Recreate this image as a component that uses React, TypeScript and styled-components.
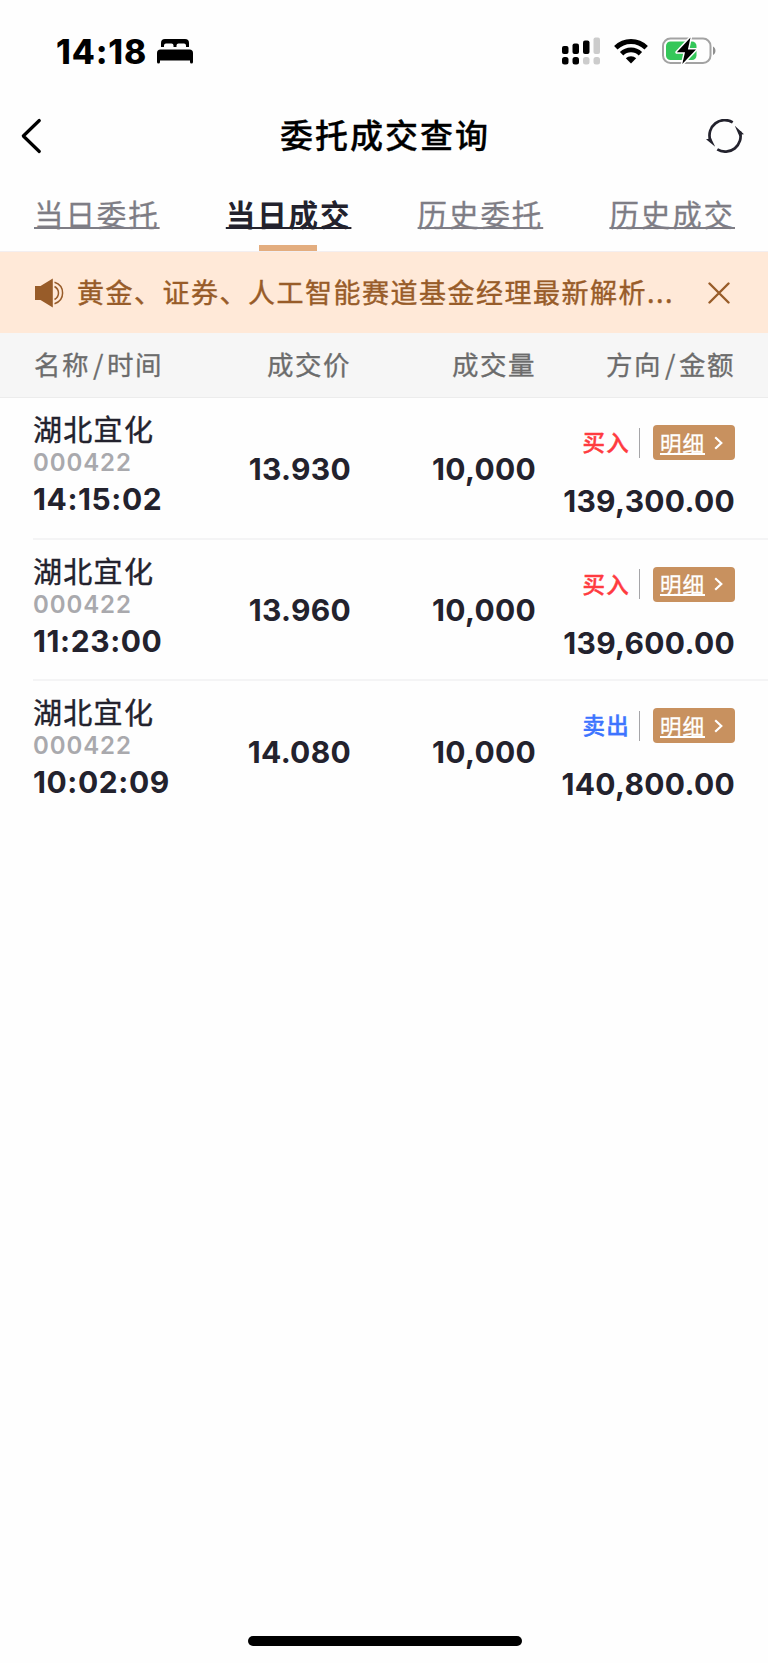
import React from 'react';
import styled, { createGlobalStyle } from 'styled-components';

const cjk = `"Noto Sans CJK SC", "Noto Sans", sans-serif`;
const latin = `Inter, "Noto Sans CJK SC", sans-serif`;

const GlobalStyle = createGlobalStyle`
  * { box-sizing: border-box; }
  html, body { margin: 0; padding: 0; background: #fefefe; }
  body { font-family: ${cjk}; color: #23222d; -webkit-font-smoothing: antialiased; }
  button { border: 0; background: none; padding: 0; margin: 0; font: inherit; color: inherit; }
`;

const Screen = styled.div`
  width: 768px;
  height: 1663px;
  display: flex;
  flex-direction: column;
  overflow: hidden;
`;

const StatusBar = styled.div`
  height: 102px;
  padding: 0 51px 0 56px;
  display: flex;
  justify-content: space-between;
  align-items: center;
  color: #000;
`;

const StatusGroup = styled.div<{ $gap: number }>`
  display: flex;
  align-items: center;
  gap: ${(p) => p.$gap}px;
`;

const Clock = styled.span`
  padding-top: 1px;
  font: 800 33.5px/40px ${latin};
  letter-spacing: 0.9px;
`;

const NavBar = styled.header`
  height: 68px;
  padding: 0 24.5px 0 20px;
  display: flex;
  align-items: center;
  justify-content: space-between;
  color: #000;
`;

const IconButton = styled.button`
  display: flex;
`;

const Title = styled.h1`
  margin: 0 0 5px 22.5px;
  font: 500 33px/48px ${cjk};
  letter-spacing: 2px;
  -webkit-text-stroke: 0.3px currentColor;
`;

const Tabs = styled.nav`
  height: 82px;
  padding: 0 33px 0 34px;
  display: flex;
  justify-content: space-between;
  border-bottom: 1px solid #f3eef0;
`;

const Tab = styled.button<{ $active?: boolean }>`
  display: flex;
  flex-direction: column;
  align-items: center;
  justify-content: space-between;
  padding-top: 21px;
  font: ${(p) => (p.$active ? 700 : 400)} 29.5px/44px ${cjk};
  letter-spacing: 1.9px;
  color: ${(p) => (p.$active ? '#23222d' : '#7e7d85')};
  -webkit-text-stroke: ${(p) => (p.$active ? 0 : 0.3)}px currentColor;
`;

const LinkLabel = styled.span`
  text-decoration: underline;
  text-decoration-thickness: 2px;
  text-underline-offset: 1px;
  text-decoration-skip-ink: none;
`;

const TabIndicator = styled.span`
  width: 58px;
  height: 6px;
  margin-right: 1px;
  background: #e3ad7f;
`;

const Notice = styled.section`
  height: 81px;
  padding: 0 38px 0 34px;
  display: flex;
  align-items: center;
  background: #ffe9d8;
  color: #985c29;
`;

const NoticeText = styled.p`
  flex: 1;
  margin: 0 0 2px 13px;
  font: 400 27px/40px ${cjk};
  letter-spacing: 1.5px;
  white-space: nowrap;
  -webkit-text-stroke: 0.4px currentColor;
`;

const Columns = styled.div`
  display: grid;
  grid-template-columns: 148px 169px 185px 199px;
`;

const TableHead = styled(Columns)`
  height: 65px;
  padding: 0 0 2px 34px;
  align-items: center;
  background: #f6f6f6;
  border-bottom: 1px solid #ececec;
  font: 400 26.5px/40px ${cjk};
  letter-spacing: 1.5px;
  color: #6c6c6c;
  -webkit-text-stroke: 0.3px currentColor;
`;

const HeadCell = styled.span<{ $end?: boolean }>`
  text-align: ${(p) => (p.$end ? 'right' : 'left')};
  white-space: nowrap;
`;

const Slash = styled.span`
  margin: 0 2px 0 3px;
`;

const TradeRow = styled(Columns)`
  height: 141.67px;
  margin-left: 33px;
  padding-left: 1px;
  align-items: center;
  border-bottom: 2px solid #f4f4f5;
  &:last-child { border-bottom-color: transparent; }
`;

const Security = styled.div`
  align-self: start;
  display: flex;
  flex-direction: column;
  padding-top: 13px;
  margin-left: -1px;
`;

const SecurityName = styled.span`
  font: 400 29px/34px ${cjk};
  letter-spacing: 1.3px;
  -webkit-text-stroke: 0.4px currentColor;
`;

const SecurityCode = styled.span`
  margin: 6px 0 8px;
  font: 600 24px/24px ${latin};
  letter-spacing: 0.9px;
  color: #a9a9ad;
`;

const Figure = styled.span`
  font: 700 30px/32px ${latin};
  letter-spacing: 0.3px;
  white-space: nowrap;
`;

const TimeFigure = styled(Figure)`
  letter-spacing: 0.6px;
`;

const CellFigure = styled(Figure)`
  padding-top: 2px;
  text-align: right;
`;

const Side = styled.div`
  align-self: start;
  display: flex;
  flex-direction: column;
  align-items: flex-end;
  gap: 25px;
  padding-top: 27px;
`;

const SideTop = styled.div`
  display: flex;
  align-items: center;
`;

const Direction = styled.span<{ $sell: boolean }>`
  margin-bottom: 2px;
  font: 500 22.5px/33px ${cjk};
  letter-spacing: 1.2px;
  color: ${(p) => (p.$sell ? '#3d74ff' : '#ff3b40')};
  -webkit-text-stroke: 0.4px currentColor;
`;

const Divider = styled.span`
  width: 1px;
  height: 30px;
  margin: 0 13px 0 9px;
  background: #a5a5a8;
`;

const DetailButton = styled.button`
  width: 82px;
  height: 35px;
  padding: 0 12px 0 7px;
  display: flex;
  align-items: center;
  justify-content: space-between;
  border-radius: 4px;
  background: #c8915f;
  color: #fff;
  font: 400 21.5px/30px ${cjk};
  letter-spacing: 1px;
  -webkit-text-stroke: 0.3px currentColor;
`;

const Spacer = styled.div`
  flex: 1;
`;

const HomeIndicator = styled.div`
  align-self: center;
  width: 274px;
  height: 10px;
  margin: 0 0 17px 1px;
  border-radius: 5px;
  background: #000;
`;

const BedIcon = () => (
  <svg width="36" height="25" viewBox="0 0 36 25" fill="#000">
    <path d="M4 8V4a4 4 0 0 1 4-4h20a4 4 0 0 1 4 4v4h-3V6.500a2 2 0 0 0-2-2h-5.500a2 2 0 0 0-2 2V8h-3V6.500a2 2 0 0 0-2-2H9a2 2 0 0 0-2 2V8z" />
    <path d="M0 14a3.500 3.500 0 0 1 3.500-3.500h29A3.500 3.500 0 0 1 36 14v9a1.500 1.500 0 0 1-3 0v-1.500H3V23a1.500 1.500 0 0 1-3 0z" />
  </svg>
);

const SignalIcon = () => (
  <svg width="38" height="28" viewBox="0 0 38 28" fill="#000">
    <rect x="0" y="9" width="6.500" height="8" rx="2" />
    <rect x="10.500" y="6.500" width="6.500" height="10.500" rx="2" />
    <rect x="21" y="3.500" width="6.500" height="13.500" rx="2" />
    <rect x="31.500" y="0.500" width="6.500" height="16.500" rx="2" fill="#ccc" />
    <rect x="0" y="20" width="6.500" height="7.500" rx="2.500" />
    <rect x="10.500" y="20" width="6.500" height="7.500" rx="2.500" />
    <rect x="21" y="20" width="6.500" height="7.500" rx="2.500" fill="#ccc" />
    <rect x="31.500" y="20" width="6.500" height="7.500" rx="2.500" fill="#ccc" />
  </svg>
);

const WifiIcon = () => (
  <svg width="34" height="25" viewBox="0 0 34 25" fill="none" stroke="#000" strokeWidth="4.800">
    <path d="M1.800 8.800a21.500 21.500 0 0 1 30.400 0" />
    <path d="M7.600 14.800a13.300 13.300 0 0 1 18.800 0" />
    <path d="M17 24.500l-5.200-5.200a7.400 7.400 0 0 1 10.400 0z" fill="#000" stroke="none" />
  </svg>
);

const BatteryIcon = () => (
  <svg width="55" height="28" viewBox="0 0 55 28">
    <rect x="1" y="1.500" width="47.500" height="24.500" rx="7.500" fill="none" stroke="#a3a3a3" strokeWidth="2" />
    <path d="M51 9.500c3.300 1.200 3.300 7.300 0 8.500z" fill="#8f8f8f" />
    <rect x="4" y="4.500" width="30.500" height="18.500" rx="4.500" fill="#34c759" />
    <path
      d="M28.500 .5L14.800 15.300h8.200L20.300 27 34 12.400h-8.100z"
      fill="#000"
      stroke="#fff"
      strokeWidth="3"
      strokeLinejoin="round"
      paintOrder="stroke"
    />
  </svg>
);

const BackIcon = () => (
  <svg width="22" height="36" viewBox="0 0 22 36" fill="none" stroke="#000" strokeWidth="3.200" strokeLinecap="round" strokeLinejoin="round">
    <path d="M19.300 2.500L3.300 18l16 15.500" />
  </svg>
);

const RefreshIcon = () => (
  <svg width="38" height="34" viewBox="0 0 38 34" fill="none" stroke="#23222d" strokeWidth="2.700">
    <path d="M26.700 3.300A15.300 15.300 0 0 0 4.200 21" />
    <path d="M11.300 30.400A15.300 15.300 0 0 0 33.800 12.500" />
    <path d="M28.800 6.800L38 15.200l-2.800.3-1.700 2z M9.200 27.800L0 20.300l2.800-.6 1.700-1.700z" fill="#23222d" stroke="none" />
  </svg>
);

const SpeakerIcon = () => (
  <svg width="30" height="30" viewBox="0 0 30 30" fill="none" stroke="#985c29" strokeWidth="1.500">
    <path d="M1 8h5.500L18.800 .5v29L6.500 22H1z" fill="#985c29" stroke="none" />
    <path d="M20.500 8.500c5.300 3 5.300 10 0 13" />
    <path d="M20.500 4.300c10.800 3.500 10.800 17.900 0 21.400" />
  </svg>
);

const CloseIcon = () => (
  <svg width="22" height="22" viewBox="0 0 22 22" fill="none" stroke="#985c29" strokeWidth="2.400" strokeLinecap="round">
    <path d="M1.500 1.500l19 19M20.500 1.500l-19 19" />
  </svg>
);

const ChevronIcon = () => (
  <svg width="9" height="14" viewBox="0 0 9 14" fill="none" stroke="#fff" strokeWidth="2.200">
    <path d="M1.200 1.200L7.300 7l-6.100 5.800" />
  </svg>
);

const tabs = ['当日委托', '当日成交', '历史委托', '历史成交'];
const activeTab = '当日成交';

const trades = [
  { time: '14:15:02', price: '13.930', side: '买入', amount: '139,300.00' },
  { time: '11:23:00', price: '13.960', side: '买入', amount: '139,600.00' },
  { time: '10:02:09', price: '14.080', side: '卖出', amount: '140,800.00' },
];

export default function App() {
  return (
    <Screen>
      <GlobalStyle />
      <StatusBar>
        <StatusGroup $gap={10}>
          <Clock>14:18</Clock>
          <BedIcon />
        </StatusGroup>
        <StatusGroup $gap={14}>
          <SignalIcon />
          <WifiIcon />
          <BatteryIcon />
        </StatusGroup>
      </StatusBar>
      <NavBar>
        <IconButton aria-label="返回"><BackIcon /></IconButton>
        <Title>委托成交查询</Title>
        <IconButton aria-label="刷新"><RefreshIcon /></IconButton>
      </NavBar>
      <Tabs>
        {tabs.map((t) => (
          <Tab key={t} $active={t === activeTab}>
            <LinkLabel>{t}</LinkLabel>
            {t === activeTab && <TabIndicator />}
          </Tab>
        ))}
      </Tabs>
      <Notice>
        <SpeakerIcon />
        <NoticeText>黄金、证券、人工智能赛道基金经理最新解析...</NoticeText>
        <IconButton aria-label="关闭"><CloseIcon /></IconButton>
      </Notice>
      <TableHead>
        <HeadCell>名称<Slash>/</Slash>时间</HeadCell>
        <HeadCell $end>成交价</HeadCell>
        <HeadCell $end>成交量</HeadCell>
        <HeadCell $end>方向<Slash>/</Slash>金额</HeadCell>
      </TableHead>
      <div>
        {trades.map((t) => (
          <TradeRow key={t.time}>
            <Security>
              <SecurityName>湖北宜化</SecurityName>
              <SecurityCode>000422</SecurityCode>
              <TimeFigure>{t.time}</TimeFigure>
            </Security>
            <CellFigure>{t.price}</CellFigure>
            <CellFigure>10,000</CellFigure>
            <Side>
              <SideTop>
                <Direction $sell={t.side === '卖出'}>{t.side}</Direction>
                <Divider />
                <DetailButton>
                  <LinkLabel>明细</LinkLabel>
                  <ChevronIcon />
                </DetailButton>
              </SideTop>
              <Figure>{t.amount}</Figure>
            </Side>
          </TradeRow>
        ))}
      </div>
      <Spacer />
      <HomeIndicator />
    </Screen>
  );
}
